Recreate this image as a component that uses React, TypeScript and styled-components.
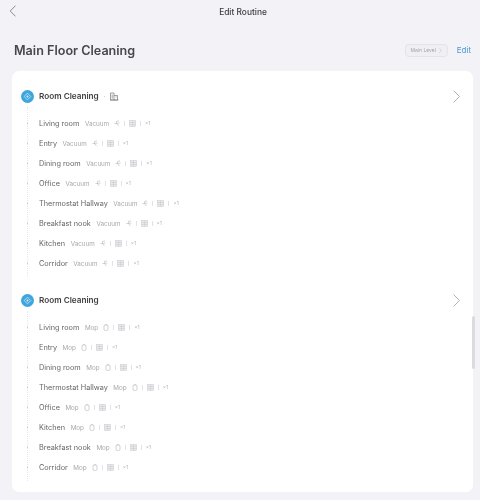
import React from "react";
import styled, { createGlobalStyle } from "styled-components";

const Global = createGlobalStyle`
  html, body { margin: 0; padding: 0; background: #f2f2f7; }
  body { font-family: Inter, Roboto, sans-serif; }
`;

const Page = styled.div`
  width: 480px;
  height: 500px;
  overflow: hidden;
  position: relative;
  background: #f2f2f7;
  display: flex;
  flex-direction: column;
  filter: blur(0.35px);
`;

const NavBar = styled.header`
  height: 23px;
  padding-left: 6px;
  display: flex;
  align-items: center;
  justify-content: center;
  position: relative;
`;

const BackButton = styled.span`
  position: absolute;
  left: 9px;
  top: 5px;
  display: flex;
  color: #77777c;
`;

const NavTitle = styled.div`
  font-size: 8.4px;
  font-weight: 500;
  color: #3c3c40;
`;

const TitleRow = styled.div`
  height: 48px;
  padding: 6px 9px 0 14px;
  box-sizing: border-box;
  display: flex;
  align-items: center;
`;

const PageTitle = styled.h1`
  margin: 0;
  flex: 1;
  font-size: 12.6px;
  font-weight: 600;
  color: #48484c;
`;

const LevelChip = styled.div`
  width: 43px;
  height: 13px;
  box-sizing: border-box;
  border: 1px solid #e4e4e8;
  border-radius: 4px;
  background: #f0f0f4;
  display: flex;
  align-items: center;
  justify-content: center;
  gap: 3px;
  font-size: 5px;
  color: #a4a4a8;
`;

const EditLink = styled.a`
  margin-left: 9px;
  font-size: 8px;
  color: #4a98d0;
`;

const Card = styled.main`
  margin: 0 7px 0 12px;
  height: 421px;
  box-sizing: border-box;
  background: #fff;
  border-radius: 7px;
  padding: 15px 0 0 9px;
  display: flex;
  flex-direction: column;
`;

const Section = styled.section`
  display: flex;
  flex-direction: column;
  &:last-child { margin-top: 17px; }
`;

const SectionHeader = styled.div`
  height: 20px;
  display: flex;
  align-items: center;
  padding-right: 12px;
`;

const BadgeIcon = styled.span`
  width: 13px;
  height: 13px;
  border-radius: 50%;
  background: #3fa6dc;
  display: flex;
  align-items: center;
  justify-content: center;
  margin-right: 5px;
`;

const SectionTitle = styled.div`
  font-size: 8.2px;
  font-weight: 600;
  color: #404044;
`;

const TitleDot = styled.span`
  width: 1px;
  height: 1px;
  margin: 0 4px 0 5px;
  background: #d0d0d4;
`;

const HeaderEnd = styled.span`
  margin-left: auto;
  display: flex;
  color: #a8a8ac;
`;

const List = styled.ul`
  list-style: none;
  margin: 7px 0 0;
  padding: 0 0 0 18px;
  position: relative;
  &::before {
    content: "";
    position: absolute;
    left: 6px;
    top: -6px;
    bottom: -4px;
    border-left: 1px dotted #e6e6ea;
  }
`;

const Row = styled.li`
  height: 20px;
  display: flex;
  align-items: center;
  position: relative;
  &::before {
    content: "";
    position: absolute;
    left: -12px;
    top: 10px;
    width: 1px;
    height: 1px;
    background: #c8c8cc;
  }
`;

const RoomName = styled.span`
  font-size: 7.3px;
  color: #66666a;
  margin-right: 5.5px;
`;

const Mode = styled.span`
  font-size: 6.3px;
  color: #a8a8ac;
  margin: 1px 5px 0 0;
`;

const Meta = styled.span`
  display: flex;
  align-items: center;
  color: #b4b4b8;
`;

const Divider = styled.span`
  width: 1px;
  height: 5px;
  margin: 0 4px;
  background: #e2e2e6;
`;

const Extra = styled.span`
  font-size: 5px;
  color: #b4b4b8;
`;

const ScrollThumb = styled.div`
  position: absolute;
  left: 472px;
  top: 316px;
  width: 3px;
  height: 53px;
  background: #dcdce0;
  border-radius: 2px;
`;

const Chevron = ({ size, left = false }: { size: number; left?: boolean }) => (
  <svg width={size * 0.6} height={size} viewBox="0 0 6 10" fill="none" stroke="currentColor" strokeWidth="0.7">
    <path d={left ? "M5.5 .5 1 5l4.5 4.5" : "M.5 .5 5 5 .5 9.5"} />
  </svg>
);

const BadgeGlyph = () => (
  <svg width="9" height="9" viewBox="0 0 9 9" fill="none" stroke="#d8effa" strokeWidth="0.7">
    <path d="M4.5 1.2 7.8 4.5 4.5 7.8 1.2 4.5z" />
    <circle cx="4.5" cy="4.5" r="1" fill="#d8effa" stroke="none" />
  </svg>
);

const BookGlyph = () => (
  <svg width="10" height="9" viewBox="0 0 10 9" fill="none" stroke="#77777c" strokeWidth="0.7">
    <path d="M1.5 1v7h3.5V1zM5 3.5h3.5V8H5M1 8h8.5M3.2 2.5v4M6.5 5h1" />
  </svg>
);

const FanGlyph = () => (
  <svg width="6" height="7" viewBox="0 0 6 7" fill="none" stroke="currentColor" strokeWidth="0.6">
    <path d="M2.5 3.5V1.5L5 .8M2.5 3.5H.5M2.5 3.5 5.5 3M2.5 3.5 4.5 6" />
  </svg>
);

const DropGlyph = () => (
  <svg width="6" height="7" viewBox="0 0 6 7" fill="none" stroke="currentColor" strokeWidth="0.6">
    <path d="M1 2.5a2 2 0 0 1 4 0v2.7a1.2 1.2 0 0 1-1.2 1.2H2.2A1.2 1.2 0 0 1 1 5.2zM3 .4v1.4" />
  </svg>
);

const PlanGlyph = () => (
  <svg width="7" height="7" viewBox="0 0 7 7" fill="#eaeaee" stroke="#c8c8cc" strokeWidth="0.5">
    <rect x=".5" y=".5" width="6" height="6" />
    <path d="M.5 2.5h6M.5 4.5h6M3.5 .5v6" />
  </svg>
);

type SectionData = { mode: string; book: boolean; rooms: string[] };

const sections: SectionData[] = [
  {
    mode: "Vacuum",
    book: true,
    rooms: ["Living room", "Entry", "Dining room", "Office", "Thermostat Hallway", "Breakfast nook", "Kitchen", "Corridor"],
  },
  {
    mode: "Mop",
    book: false,
    rooms: ["Living room", "Entry", "Dining room", "Thermostat Hallway", "Office", "Kitchen", "Breakfast nook", "Corridor"],
  },
];

export default function App() {
  return (
    <>
      <Global />
      <Page>
        <NavBar>
          <BackButton><Chevron size={12} left /></BackButton>
          <NavTitle>Edit Routine</NavTitle>
        </NavBar>
        <TitleRow>
          <PageTitle>Main Floor Cleaning</PageTitle>
          <LevelChip>Main Level <Chevron size={5} /></LevelChip>
          <EditLink>Edit</EditLink>
        </TitleRow>
        <Card>
          {sections.map((s, i) => (
            <Section key={i}>
              <SectionHeader>
                <BadgeIcon><BadgeGlyph /></BadgeIcon>
                <SectionTitle>Room Cleaning</SectionTitle>
                {s.book && (<><TitleDot /><BookGlyph /></>)}
                <HeaderEnd><Chevron size={13} /></HeaderEnd>
              </SectionHeader>
              <List>
                {s.rooms.map((room) => (
                  <Row key={room}>
                    <RoomName>{room}</RoomName>
                    <Mode>{s.mode}</Mode>
                    <Meta>
                      {s.mode === "Vacuum" ? <FanGlyph /> : <DropGlyph />}
                      <Divider />
                      <PlanGlyph />
                      <Divider />
                      <Extra>×1</Extra>
                    </Meta>
                  </Row>
                ))}
              </List>
            </Section>
          ))}
        </Card>
        <ScrollThumb />
      </Page>
    </>
  );
}
